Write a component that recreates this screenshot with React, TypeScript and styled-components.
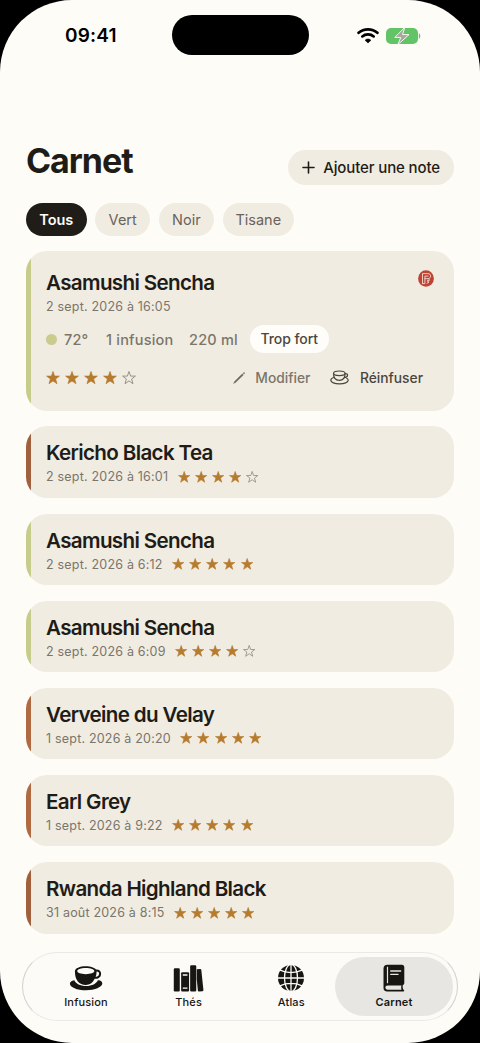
import React from "react";
import styled, { createGlobalStyle } from "styled-components";

const Global = createGlobalStyle`
  * { box-sizing: border-box; }
  body { margin: 0; background: #000; overflow: hidden; }
  button { border: 0; padding: 0; margin: 0; font: inherit; background: none; color: inherit; }
`;

const Screen = styled.div`
  width: 480px;
  height: 1043px;
  overflow: hidden;
  border-radius: 72px;
  background: #fdfcf7;
  color: #1f1c17;
  font-family: Inter, "Liberation Sans", sans-serif;
  display: flex;
  flex-direction: column;
`;

const StatusBar = styled.div`
  height: 70px;
  flex: none;
  padding: 15px 59px 0 65px;
  display: flex;
  justify-content: space-between;
  align-items: flex-start;
  color: #000;
`;

const Time = styled.div`
  width: 106px;
  font-size: 19px;
  line-height: 42px;
  font-weight: 600;
  letter-spacing: 0.2px;
`;

const Island = styled.div`
  width: 137px;
  height: 40px;
  border-radius: 20px;
  background: #000;
`;

const Indicators = styled.div`
  width: 112px;
  height: 41px;
  display: flex;
  align-items: center;
  justify-content: flex-end;
  gap: 7px;
`;

const Header = styled.header`
  flex: none;
  height: 115px;
  padding: 0 26px;
  display: flex;
  justify-content: space-between;
  align-items: flex-end;
`;

const PageTitle = styled.h1`
  margin: 0 0 3px;
  font-size: 34px;
  line-height: 42px;
  font-weight: 700;
  letter-spacing: -1.05px;
`;

const AddButton = styled.button`
  width: 166px;
  height: 35px;
  border-radius: 18px;
  background: #f1ece2;
  display: flex;
  align-items: center;
  justify-content: flex-end;
  padding-right: 14px;
  gap: 8px;
  font-size: 15px;
  font-weight: 500;
  letter-spacing: -0.12px;
  white-space: nowrap;
`;

const Filters = styled.nav`
  flex: none;
  display: flex;
  gap: 8.7px;
  padding: 18px 26px 15px;
`;

const Chip = styled.button<{ $w: number; $active?: boolean }>`
  width: ${(p) => p.$w}px;
  height: 33px;
  border-radius: 17px;
  font-size: 14.5px;
  font-weight: ${(p) => (p.$active ? 600 : 400)};
  color: ${(p) => (p.$active ? "#fdfcf7" : "#696359")};
  background: ${(p) => (p.$active ? "#201d19" : "#f1ece2")};
`;

const List = styled.main`
  flex: none;
  display: flex;
  flex-direction: column;
  gap: 15.9px;
  padding: 0 26px;
`;

const Card = styled.article<{ $accent: string; $tall?: boolean }>`
  height: ${(p) => (p.$tall ? 159.5 : 71.3)}px;
  border-radius: 21px;
  overflow: hidden;
  background: linear-gradient(90deg, ${(p) => p.$accent} 4.6px, #f0ece2 4.9px);
  padding: ${(p) => (p.$tall ? 19 : 14)}px 20px 0;
`;

const CardTop = styled.div`
  display: flex;
  justify-content: space-between;
`;

const TeaName = styled.h2`
  margin: 0;
  font-size: 20.6px;
  line-height: 26px;
  font-weight: 600;
  letter-spacing: -0.65px;
  white-space: nowrap;
`;

const MetaRow = styled.div`
  display: flex;
  align-items: center;
  gap: 9.5px;
  height: 21px;
`;

const Stamp = styled.span`
  font-size: 12.5px;
  line-height: 21px;
  letter-spacing: 0.2px;
  color: #7b756a;
  white-space: nowrap;
`;

const Stars = styled.div<{ $gap: number }>`
  display: flex;
  gap: ${(p) => p.$gap}px;
`;

const Brew = styled.div`
  display: flex;
  align-items: center;
  height: 28px;
  margin-top: 8px;
  font-size: 14.5px;
  font-weight: 500;
  letter-spacing: 0.2px;
  color: #7b756a;
  white-space: nowrap;
`;

const Dot = styled.i`
  width: 11px;
  height: 11px;
  border-radius: 50%;
  background: #c9cc8c;
  margin-right: 7px;
`;

const Fact = styled.span<{ $w: number }>`
  width: ${(p) => p.$w}px;
`;

const Tag = styled.span`
  width: 79.5px;
  height: 27.5px;
  border-radius: 14px;
  background: #fefdf9;
  color: #4b463d;
  font-size: 14px;
  letter-spacing: -0.05px;
  line-height: 27.5px;
  text-align: center;
`;

const CardActions = styled.div`
  display: flex;
  align-items: center;
  height: 30px;
  margin-top: 9.5px;
`;

const Action = styled.button<{ $strong?: boolean }>`
  display: flex;
  align-items: center;
  font-size: 13.8px;
  font-weight: ${(p) => (p.$strong ? 500 : 450)};
  letter-spacing: 0;
  color: ${(p) => (p.$strong ? "#4b463d" : "#7b756a")};
  margin-left: ${(p) => (p.$strong ? "20px" : "auto")};
  margin-right: ${(p) => (p.$strong ? "11px" : "0")};
  gap: 9.5px;
`;

const TabBar = styled.nav`
  flex: none;
  height: 69px;
  margin: 18.3px 22px 0;
  border: 1px solid #eae9e5;
  border-left-color: #d2d1ce;
  border-right-color: #d2d1ce;
  border-radius: 35px;
  background: #fcfbf8;
  display: flex;
  align-items: center;
  padding: 0 4px;
`;

const Tab = styled.button<{ $active?: boolean }>`
  flex: none;
  width: 118px;
  height: 59px;
  border-radius: 30px;
  background: ${(p) => (p.$active ? "#e7e6e2" : "transparent")};
  display: flex;
  flex-direction: column;
  align-items: center;
  padding-top: 7px;
  color: #171613;

  & + & {
    margin-left: -15.33px;
  }
`;

const TabIcon = styled.span`
  height: 28px;
  display: flex;
  align-items: center;
`;

const TabLabel = styled.span<{ $active?: boolean }>`
  font-size: 11px;
  line-height: 14px;
  margin-top: 3px;
  font-weight: ${(p) => (p.$active ? 600 : 500)};
  letter-spacing: 0.15px;
`;

const STAR = "M7 .5 8.6 5.1 13.4 5.1 9.6 8 11 12.7 7 9.9 3 12.7 4.4 8 .6 5.1 5.4 5.1Z";

function Rating({ value, gap, size }: { value: number; gap: number; size: number }) {
  return (
    <Stars $gap={gap}>
      {[1, 2, 3, 4, 5].map((n) => (
        <svg key={n} width={size} height={size} viewBox="0 0 14 14">
          <path
            d={STAR}
            fill={n <= value ? "#b67b2e" : "none"}
            stroke={n <= value ? "#b67b2e" : "#948e84"}
            strokeWidth={n <= value ? 0.7 : 0.95}
            strokeLinejoin="round"
          />
        </svg>
      ))}
    </Stars>
  );
}

const Wifi = () => (
  <svg width="22" height="17" viewBox="0 0 22 17" fill="none" stroke="#000" strokeWidth="2.7">
    <path d="M1.6 5.8C6.9 1.1 15.1 1.1 20.4 5.8" strokeLinecap="round" />
    <path d="M5.3 9.4c3.2-2.8 8.200-2.8 11.4 0" strokeLinecap="round" />
    <path d="M11 16 8.1 13.2c1.6-1.6 4.2-1.6 5.8 0Z" fill="#000" strokeWidth=".6" strokeLinejoin="round" />
  </svg>
);

const Battery = () => (
  <svg width="35" height="18" viewBox="0 0 35 18">
    <rect x="0" y="1" width="32" height="16" rx="5" fill="#62c466" />
    <path d="M32.8 6.2c2 .6 2 5 0 5.6Z" fill="#62c466" />
    <path
      d="M18.800.4 8.800 10.400h6l-3 7.300L23 7.600h-6.500Z"
      fill="#aaa69e"
      stroke="#f2f8ef"
      strokeWidth="1"
      strokeLinejoin="round"
    />
  </svg>
);

const Plus = () => (
  <svg width="13" height="13" viewBox="0 0 13 13" stroke="#1f1c17" strokeWidth="1.6" strokeLinecap="round">
    <path d="M6.5 1v11M1 6.5h11" />
  </svg>
);

const Seal = () => (
  <svg width="16" height="17" viewBox="0 0 16 17" fill="none">
    <ellipse cx="8" cy="8.5" rx="7.9" ry="8.2" fill="#bd4336" />
    <g stroke="#f3d3c6" strokeWidth=".95" strokeLinejoin="round" strokeLinecap="round">
      <path d="M4.5 13.6V3.6h5.3c1.9 0 2.8 1 2.8 2.5S11.6 8.6 10.2 8.7" />
      <path d="M4.5 13.6h2.4V6.1h3.1" />
      <path d="M6.9 8.7h3.3l1.5 1.3-2.6.9 1.9 1.2-2 1.2" />
    </g>
  </svg>
);

const Pencil = () => (
  <svg width="14" height="14" viewBox="0 0 14 14">
    <path d="m1.5 12.500 1-2L10.300 2.800l1.100 1.100-7.800 7.700Z" fill="#6d675d" stroke="#6d675d" strokeWidth=".3" />
    <path d="m10.900 2.200.7-.7c.6-.5 1.600.4 1.100 1.100l-.7.7Z" fill="#6d675d" />
  </svg>
);

const CupOutline = () => (
  <svg width="20" height="15" viewBox="0 0 20 15" fill="none" stroke="#4b463d" strokeWidth="1.2">
    <ellipse cx="9.3" cy="3.3" rx="5.8" ry="2.3" />
    <path d="M3.5 3.3c0 3.9 1.7 7.1 5.800 7.1s5.800-3.200 5.800-7.1" />
    <path d="M15 3.7c3.7-.7 3.5 3.9-1.1 4" />
    <path d="M4.3 7.3C2 8 .8 9 .8 10.200c0 2.100 3.800 3.700 8.700 3.700s8.700-1.600 8.700-3.700c0-.9-.7-1.600-1.900-2.200" />
  </svg>
);

const CupIcon = () => (
  <svg width="34" height="28" viewBox="0 0 34 28" fill="currentColor">
    <path d="M5.3 16.3C2.5 16.5.9 18 .9 19.7.9 23 8 26.300 17 26.300s16.300-3.300 16.300-6.700c0-1.800-1.700-3.600-4.400-3.300-1.500 3.400-5.800 5.800-11.800 5.800S6.700 19.700 5.300 16.300Z" />
    <path
      fillRule="evenodd"
      d="M5.9 7.2c0-2.8 4.9-4.9 10.9-4.9 4.8 0 8.8 1.3 10.2 3.3 3.2-.3 5.1 1.6 5.1 4.1 0 3.2-2.6 5.5-6.4 5-1.9 4.2-5 6.2-8.9 6.2C10.2 20.9 5.9 16.3 5.9 7.2Zm10.9 3c5 0 8.6-1.400 8.600-3.100S21.800 4 16.800 4 8.200 5.400 8.200 7.100s3.600 3.100 8.600 3.100Zm10.800-2.600c0 1.900-.3 3.600-.9 5.300 1.900 0 3.400-1.400 3.400-3.100 0-1.400-1-2.300-2.500-2.200Z"
    />
  </svg>
);

const BooksIcon = () => (
  <svg width="31" height="28" viewBox="0 0 32 28" fill="currentColor">
    <rect x=".8" y="4" width="6.2" height="24" rx="1.2" />
    <rect x="8.4" y="8" width="8.2" height="20" rx="1.2" />
    <rect x="17.7" y=".8" width="6.3" height="27.2" rx="1.2" />
    <path d="m24.5 5 3.600-.4c.6 0 1 .2 1.100.8l2.200 21c.1.700-.2 1.100-.9 1.200l-3.700.4c-.7.100-1-.2-1.100-.8l-1.200-12Z" />
    <path d="M10.1 10.9h4.8M10.1 24.5h4.8" stroke="#fcfbf8" strokeWidth="1.4" />
  </svg>
);

const GlobeIcon = () => (
  <svg width="28" height="28" viewBox="0 0 28 28">
    <circle cx="14" cy="14" r="13" fill="currentColor" />
    <g fill="none" stroke="#fcfbf8" strokeWidth="1.3">
      <path d="M14 0v28M0 14h28M3 6.2c6.5 3.2 15.5 3.2 22 0M3 21.8c6.5-3.2 15.5-3.2 22 0" />
      <ellipse cx="14" cy="14" rx="6.5" ry="13.6" />
    </g>
  </svg>
);

const BookIcon = () => (
  <svg width="22" height="28" viewBox="0 0 22 28">
    <path
      fill="currentColor"
      fillRule="evenodd"
      d="M4.5.8h14.300c1.700 0 2.500.9 2.500 2.500v15.500c0 1.300-.5 2-1.400 2.300-.4 1.400-.3 3 .4 4.300.7.300.9.700.9 1.200 0 .6-.5 1-1.200 1H4.200C1.900 27.600.5 26.100.5 24V4.700C.5 2.200 1.900.8 4.500.8Zm.2 20.600c-1.500 0-2.300.8-2.300 2.100s.8 2.200 2.300 2.200h13.800c-.5-1.400-.5-2.900-.1-4.300Z"
    />
    <path d="M4.5 2.7v16.5" stroke="#e7e6e2" strokeWidth="1.2" />
    <path d="M7.7 7h10M7.7 10.3h7.4" stroke="#e7e6e2" strokeWidth="1.3" strokeLinecap="round" />
  </svg>
);

const GREEN = "#c8cc8a";
const BROWN = "#a0603d";
const RUST = "#b06a42";

const entries = [
  { name: "Kericho Black Tea", date: "2 sept. 2026 à 16:01", stars: 4, accent: BROWN },
  { name: "Asamushi Sencha", date: "2 sept. 2026 à 6:12", stars: 5, accent: GREEN },
  { name: "Asamushi Sencha", date: "2 sept. 2026 à 6:09", stars: 4, accent: GREEN },
  { name: "Verveine du Velay", date: "1 sept. 2026 à 20:20", stars: 5, accent: RUST },
  { name: "Earl Grey", date: "1 sept. 2026 à 9:22", stars: 5, accent: RUST },
  { name: "Rwanda Highland Black", date: "31 août 2026 à 8:15", stars: 5, accent: BROWN },
];

const tabs = [
  { label: "Infusion", Icon: CupIcon },
  { label: "Thés", Icon: BooksIcon },
  { label: "Atlas", Icon: GlobeIcon },
  { label: "Carnet", Icon: BookIcon, active: true },
];

export default function App() {
  return (
    <>
      <Global />
      <Screen>
        <StatusBar>
          <Time>09:41</Time>
          <Island />
          <Indicators>
            <Wifi />
            <Battery />
          </Indicators>
        </StatusBar>
        <Header>
          <PageTitle>Carnet</PageTitle>
          <AddButton>
            <Plus />
            Ajouter une note
          </AddButton>
        </Header>
        <Filters>
          <Chip $w={60.5} $active>Tous</Chip>
          <Chip $w={55}>Vert</Chip>
          <Chip $w={55}>Noir</Chip>
          <Chip $w={71.5}>Tisane</Chip>
        </Filters>
        <List>
          <Card $accent={GREEN} $tall>
            <CardTop>
              <TeaName>Asamushi Sencha</TeaName>
              <Seal />
            </CardTop>
            <MetaRow>
              <Stamp>2 sept. 2026 à 16:05</Stamp>
            </MetaRow>
            <Brew>
              <Dot />
              <Fact $w={42}>72°</Fact>
              <Fact $w={83}>1 infusion</Fact>
              <Fact $w={60.5}>220 ml</Fact>
              <Tag>Trop fort</Tag>
            </Brew>
            <CardActions>
              <Rating value={4} gap={4.9} size={14} />
              <Action>
                <Pencil />
                Modifier
              </Action>
              <Action $strong>
                <CupOutline />
                Réinfuser
              </Action>
            </CardActions>
          </Card>
          {entries.map((e) => (
            <Card key={e.date} $accent={e.accent}>
              <TeaName>{e.name}</TeaName>
              <MetaRow>
                <Stamp>{e.date}</Stamp>
                <Rating value={e.stars} gap={4.7} size={12.4} />
              </MetaRow>
            </Card>
          ))}
        </List>
        <TabBar>
          {tabs.map(({ label, Icon, active }) => (
            <Tab key={label} $active={active}>
              <TabIcon>
                <Icon />
              </TabIcon>
              <TabLabel $active={active}>{label}</TabLabel>
            </Tab>
          ))}
        </TabBar>
      </Screen>
    </>
  );
}
